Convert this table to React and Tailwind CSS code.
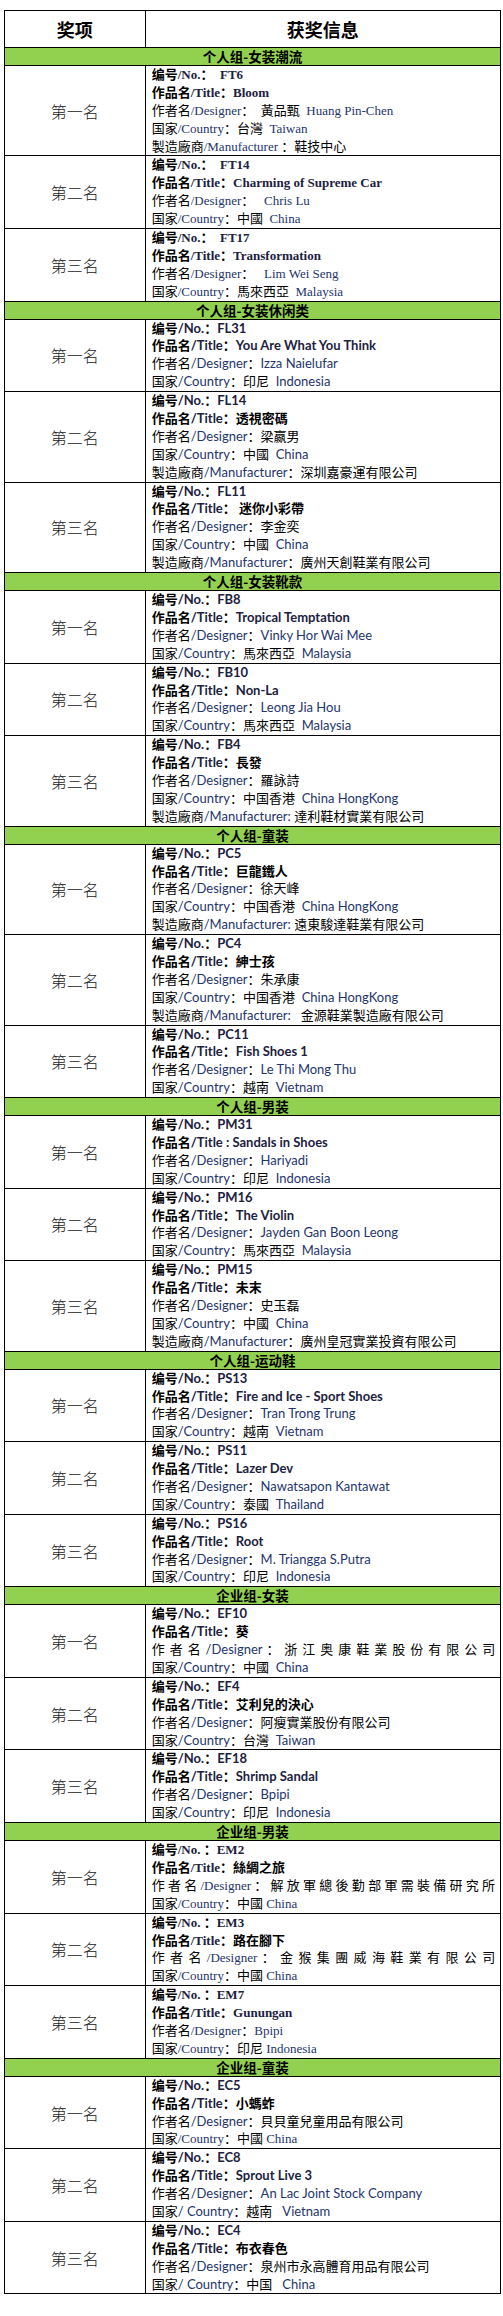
const SANS = "font-['Lato','Noto_Sans_CJK_SC',sans-serif]";
const SERIF = "font-['Liberation_Serif','Noto_Sans_CJK_SC',serif]";

// line: [text, flags]  flags: b = bold, s = serif, j = justified
const SECTIONS = [
  {
    title: "个人组-女装潮流",
    rows: [
      ["第一名", [["编号/No.：  FT6", "bs"], ["作品名/Title：Bloom", "bs"], ["作者名/Designer：  黃品甄  Huang Pin-Chen", "s"], ["国家/Country：台灣  Taiwan", "s"], ["製造廠商/Manufacturer ：鞋技中心", "s"]]],
      ["第二名", [["编号/No.：  FT14", "bs"], ["作品名/Title：Charming of Supreme Car", "bs"], ["作者名/Designer：   Chris Lu", "s"], ["国家/Country：中國  China", "s"]]],
      ["第三名", [["编号/No.：  FT17", "bs"], ["作品名/Title：Transformation", "bs"], ["作者名/Designer：   Lim Wei Seng", "s"], ["国家/Country：馬來西亞  Malaysia", "s"]]],
    ],
  },
  {
    title: "个人组-女装休闲类",
    rows: [
      ["第一名", [["编号/No.：FL31", "b"], ["作品名/Title：You Are What You Think", "b"], ["作者名/Designer：Izza Naielufar", ""], ["国家/Country：印尼  Indonesia", ""]]],
      ["第二名", [["编号/No.：FL14", "b"], ["作品名/Title：透視密碼", "b"], ["作者名/Designer：梁嬴男", ""], ["国家/Country：中國  China", ""], ["製造廠商/Manufacturer：深圳嘉豪運有限公司", ""]]],
      ["第三名", [["编号/No.：FL11", "b"], ["作品名/Title： 迷你小彩帶", "b"], ["作者名/Designer：李金奕", ""], ["国家/Country：中國  China", ""], ["製造廠商/Manufacturer：廣州天創鞋業有限公司", ""]]],
    ],
  },
  {
    title: "个人组-女装靴款",
    rows: [
      ["第一名", [["编号/No.：FB8", "b"], ["作品名/Title：Tropical Temptation", "b"], ["作者名/Designer：Vinky Hor Wai Mee", ""], ["国家/Country：馬來西亞  Malaysia", ""]]],
      ["第二名", [["编号/No.：FB10", "b"], ["作品名/Title：Non-La", "b"], ["作者名/Designer：Leong Jia Hou", ""], ["国家/Country：馬來西亞  Malaysia", ""]]],
      ["第三名", [["编号/No.：FB4", "b"], ["作品名/Title：長發", "b"], ["作者名/Designer：羅詠詩", ""], ["国家/Country：中国香港  China HongKong", ""], ["製造廠商/Manufacturer: 達利鞋材實業有限公司", ""]]],
    ],
  },
  {
    title: "个人组-童装",
    rows: [
      ["第一名", [["编号/No.：PC5", "b"], ["作品名/Title：巨龍鐵人", "b"], ["作者名/Designer：徐天峰", ""], ["国家/Country：中国香港  China HongKong", ""], ["製造廠商/Manufacturer: 遠東駿達鞋業有限公司", ""]]],
      ["第二名", [["编号/No.：PC4", "b"], ["作品名/Title：紳士孩", "b"], ["作者名/Designer：朱承康", ""], ["国家/Country：中国香港  China HongKong", ""], ["製造廠商/Manufacturer:   金源鞋業製造廠有限公司", ""]]],
      ["第三名", [["编号/No.：PC11", "b"], ["作品名/Title：Fish Shoes 1", "b"], ["作者名/Designer：Le Thi Mong Thu", ""], ["国家/Country：越南  Vietnam", ""]]],
    ],
  },
  {
    title: "个人组-男装",
    rows: [
      ["第一名", [["编号/No.：PM31", "b"], ["作品名/Title : Sandals in Shoes", "b"], ["作者名/Designer：Hariyadi", ""], ["国家/Country：印尼  Indonesia", ""]]],
      ["第二名", [["编号/No.：PM16", "b"], ["作品名/Title：The Violin", "b"], ["作者名/Designer：Jayden Gan Boon Leong", ""], ["国家/Country：馬來西亞  Malaysia", ""]]],
      ["第三名", [["编号/No.：PM15", "b"], ["作品名/Title：未末", "b"], ["作者名/Designer：史玉磊", ""], ["国家/Country：中國  China", ""], ["製造廠商/Manufacturer：廣州皇冠實業投資有限公司", ""]]],
    ],
  },
  {
    title: "个人组-运动鞋",
    rows: [
      ["第一名", [["编号/No.：PS13", "b"], ["作品名/Title：Fire and Ice - Sport Shoes", "b"], ["作者名/Designer：Tran Trong Trung", ""], ["国家/Country：越南  Vietnam", ""]]],
      ["第二名", [["编号/No.：PS11", "b"], ["作品名/Title：Lazer Dev", "b"], ["作者名/Designer：Nawatsapon Kantawat", ""], ["国家/Country：泰國  Thailand", ""]]],
      ["第三名", [["编号/No.：PS16", "b"], ["作品名/Title：Root", "b"], ["作者名/Designer：M. Triangga S.Putra", ""], ["国家/Country：印尼  Indonesia", ""]]],
    ],
  },
  {
    title: "企业组-女装",
    rows: [
      ["第一名", [["编号/No.：EF10", "b"], ["作品名/Title：葵", "b"], ["作 者 名 /Designer ： 浙 江 奥 康 鞋 業 股 份 有 限 公 司", "j"], ["国家/Country：中國  China", ""]]],
      ["第二名", [["编号/No.：EF4", "b"], ["作品名/Title：艾利兒的決心", "b"], ["作者名/Designer：阿瘦實業股份有限公司", ""], ["国家/Country：台灣  Taiwan", ""]]],
      ["第三名", [["编号/No.：EF18", "b"], ["作品名/Title：Shrimp Sandal", "b"], ["作者名/Designer：Bpipi", ""], ["国家/Country：印尼  Indonesia", ""]]],
    ],
  },
  {
    title: "企业组-男装",
    rows: [
      ["第一名", [["编号/No. ：EM2", "bs"], ["作品名/Title：絲綢之旅", "bs"], ["作 者 名 /Designer ： 解 放 軍 總 後 勤 部 軍 需 裝 備 研 究 所", "sj"], ["国家/Country：中國 China", "s"]]],
      ["第二名", [["编号/No. ：EM3", "bs"], ["作品名/Title：路在腳下", "bs"], ["作 者 名 /Designer ： 金 猴 集 團 威 海 鞋 業 有 限 公 司", "sj"], ["国家/Country：中國 China", "s"]]],
      ["第三名", [["编号/No. ：EM7", "bs"], ["作品名/Title：Gunungan", "bs"], ["作者名/Designer：Bpipi", "s"], ["国家/Country：印尼 Indonesia", "s"]]],
    ],
  },
  {
    title: "企业组-童装",
    rows: [
      ["第一名", [["编号/No.：EC5", "b"], ["作品名/Title：小螞蚱", "b"], ["作者名/Designer：貝貝童兒童用品有限公司", ""], ["国家/Country：中國 China", "s"]]],
      ["第二名", [["编号/No.：EC8", "b"], ["作品名/Title：Sprout Live 3", "b"], ["作者名/Designer：An Lac Joint Stock Company", ""], ["国家/ Country：越南   Vietnam", ""]]],
      ["第三名", [["编号/No.：EC4", "b"], ["作品名/Title：布衣春色", "b"], ["作者名/Designer：泉州市永高體育用品有限公司", ""], ["国家/ Country：中国   China", ""]]],
    ],
  },
];

const RUNS = /[\u2E80-\u9FFF\u3000-\u303F\uFF00-\uFFEF]+|[^\u2E80-\u9FFF\u3000-\u303F\uFF00-\uFFEF]+/g;

const Line = ({ text, flags }) => {
  const bold = flags.includes("b");
  const runs = text.match(RUNS) || [];
  return (
    <div
      className={`whitespace-pre h-[17.9px] leading-[17.9px] text-[13px] ${
        flags.includes("s") ? SERIF : SANS
      } ${bold ? "font-bold" : "font-normal"} ${
        flags.includes("j") ? "[text-align-last:justify] whitespace-normal" : ""
      }`}
    >
      {runs.map((r, i) => {
        const cjk = /[\u2E80-\u9FFF\u3000-\u303F\uFF00-\uFFEF]/.test(r);
        return (
          <span
            key={i}
            className={
              cjk ? "text-black" : bold ? "text-[#1c2140]" : "text-[#24356b]"
            }
          >
            {r}
          </span>
        );
      })}
    </div>
  );
};

export default function App() {
  return (
    <div className="bg-white pt-[10px] pl-[4px] pb-[20px]">
      <table className="w-[497px] border-collapse border border-black">
        <thead>
          <tr className="h-[37px]">
            <th className="w-[164px] border border-black text-[18px] font-bold text-black font-['Noto_Sans_CJK_SC',sans-serif]">
              奖项
            </th>
            <th className="border border-black text-[18px] font-bold text-black font-['Noto_Sans_CJK_SC',sans-serif]">
              获奖信息
            </th>
          </tr>
        </thead>
        {SECTIONS.map((sec) => (
          <tbody key={sec.title}>
            <tr>
              <td
                colSpan={2}
                className="h-[17px] p-0 border border-black bg-[#92d050] text-center text-[13.5px] leading-[17px] font-bold text-black font-['Noto_Sans_CJK_SC',sans-serif]"
              >
                {sec.title}
              </td>
            </tr>
            {sec.rows.map(([rank, lines], i) => (
              <tr key={i}>
                <td className="border border-black p-0 text-center align-middle text-[16px] text-[#222] font-['Noto_Sans_CJK_SC',sans-serif] font-light">
                  {rank}
                </td>
                <td className="border border-black py-0 pl-[6px] pr-[5px] align-top">
                  {lines.map(([t, f], k) => (
                    <Line key={k} text={t} flags={f} />
                  ))}
                </td>
              </tr>
            ))}
          </tbody>
        ))}
      </table>
    </div>
  );
}
